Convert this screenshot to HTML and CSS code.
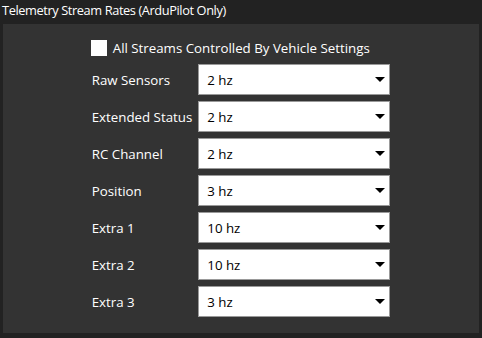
FILE: index.html
```html
<!DOCTYPE html>
<html lang="en">
<head>
    <meta charset="UTF-8">
    <title>Telemetry Stream Rates</title>
    <link rel="stylesheet" href="styles.css">
</head>
<body>
    <div class="title">Telemetry Stream Rates (ArduPilot Only)</div>
    <div class="panel">
        <div class="content">
            <label class="check-row">
                <span class="checkbox"></span>
                <span>All Streams Controlled By Vehicle Settings</span>
            </label>
            <div class="rates">
                <div class="label">Raw Sensors</div>
                <div class="combo"><span>2 hz</span><span class="arrow"></span></div>
                <div class="label">Extended Status</div>
                <div class="combo"><span>2 hz</span><span class="arrow"></span></div>
                <div class="label">RC Channel</div>
                <div class="combo"><span>2 hz</span><span class="arrow"></span></div>
                <div class="label">Position</div>
                <div class="combo"><span>3 hz</span><span class="arrow"></span></div>
                <div class="label">Extra 1</div>
                <div class="combo"><span>10 hz</span><span class="arrow"></span></div>
                <div class="label">Extra 2</div>
                <div class="combo"><span>10 hz</span><span class="arrow"></span></div>
                <div class="label">Extra 3</div>
                <div class="combo"><span>3 hz</span><span class="arrow"></span></div>
            </div>
        </div>
    </div>
</body>
</html>
```

FILE: styles.css
```css
body {
    margin: 0;
    background-color: #222222;
    font-family: "Open Sans", sans-serif;
    font-size: 13.3px;
    color: #ffffff;
}
.title {
    height: 24px;
    line-height: 20px;
    padding-left: 2px;
    font-size: 12.8px;
    letter-spacing: -0.4px;
}
.panel {
    margin: 0 3px;
    height: 309px;
    background-color: #333333;
    display: flex;
    justify-content: center;
}
.content {
    display: flex;
    flex-direction: column;
    padding-top: 16px;
}
.check-row {
    display: flex;
    align-items: center;
    gap: 6px;
    height: 16px;
    margin-left: -1px;
    margin-bottom: 8px;
}
.checkbox {
    width: 16px;
    height: 16px;
    background-color: #ffffff;
}
.rates {
    display: grid;
    grid-template-columns: auto 192px;
    column-gap: 6px;
    row-gap: 6px;
    align-items: center;
}
.combo {
    height: 31px;
    box-sizing: border-box;
    border: 1px solid #999999;
    background-color: #ffffff;
    color: #000000;
    display: flex;
    align-items: center;
    justify-content: space-between;
    padding: 0 4px 0 8px;
}
.arrow {
    width: 0;
    height: 0;
    border-left: 5px solid transparent;
    border-right: 5px solid transparent;
    border-top: 5px solid #000000;
}
```
